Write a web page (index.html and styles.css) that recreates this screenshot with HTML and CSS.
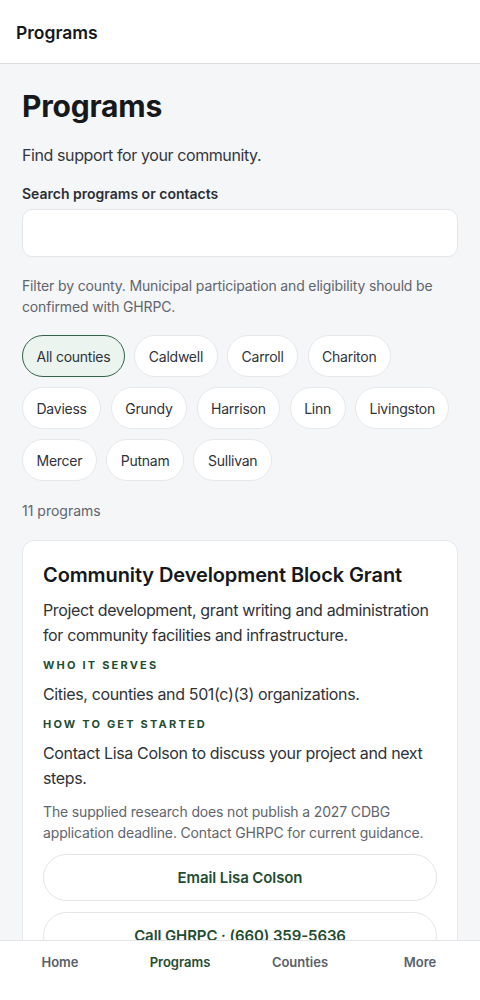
FILE: index.html
```html
<!DOCTYPE html>
<html lang="en">
<head>
<meta charset="utf-8">
<meta name="viewport" content="width=device-width, initial-scale=1">
<title>Programs</title>
<link rel="stylesheet" href="styles.css">
</head>
<body>
<header class="topbar">
  <span class="topbar-title">Programs</span>
</header>

<main class="page">
  <h1 class="page-title">Programs</h1>
  <p class="lede">Find support for your community.</p>

  <div class="search">
    <label class="search-label" for="q">Search programs or contacts</label>
    <input class="search-input" id="q" type="search">
  </div>

  <p class="hint">Filter by county. Municipal participation and eligibility should be confirmed with GHRPC.</p>

  <div class="chips">
    <button class="chip is-active">All counties</button>
    <button class="chip">Caldwell</button>
    <button class="chip">Carroll</button>
    <button class="chip">Chariton</button>
    <button class="chip">Daviess</button>
    <button class="chip">Grundy</button>
    <button class="chip">Harrison</button>
    <button class="chip">Linn</button>
    <button class="chip">Livingston</button>
    <button class="chip">Mercer</button>
    <button class="chip">Putnam</button>
    <button class="chip">Sullivan</button>
  </div>

  <p class="count">11 programs</p>

  <article class="card">
    <h2 class="card-title">Community Development Block Grant</h2>
    <p class="card-text">Project development, grant writing and administration for community facilities and infrastructure.</p>
    <h3 class="card-label">Who it serves</h3>
    <p class="card-text">Cities, counties and 501(c)(3) organizations.</p>
    <h3 class="card-label">How to get started</h3>
    <p class="card-text">Contact Lisa Colson to discuss your project and next steps.</p>
    <p class="card-note">The supplied research does not publish a 2027 CDBG application deadline. Contact GHRPC for current guidance.</p>
    <a class="card-btn" href="#">Email Lisa Colson</a>
    <a class="card-btn" href="#">Call GHRPC · (660) 359-5636</a>
  </article>
</main>

<nav class="tabbar">
  <a class="tab" href="#">Home</a>
  <a class="tab is-current" href="#">Programs</a>
  <a class="tab" href="#">Counties</a>
  <a class="tab" href="#">More</a>
</nav>
</body>
</html>
```

FILE: styles.css
```css
* {
  box-sizing: border-box;
}

html, body {
  margin: 0;
  padding: 0;
}

body {
  font-family: Inter, "Noto Sans", "Liberation Sans", sans-serif;
  background: #f5f6f8;
  color: #16181c;
  overflow: hidden;
  height: 1000px;
}

/* top app bar */
.topbar {
  height: 64px;
  background: #ffffff;
  border-bottom: 1px solid #d9dcdf;
  display: flex;
  align-items: center;
  padding: 0 16px;
}

.topbar-title {
  font-size: 17.5px;
  font-weight: 600;
  margin-top: 2px;
}

/* page body */
.page {
  padding: 24px 22px 0 22px;
  display: flex;
  flex-direction: column;
}

.page-title {
  margin: 0;
  font-size: 30px;
  line-height: 36px;
  font-weight: 700;
  letter-spacing: -0.2px;
}

.lede {
  margin: 19px 0 0;
  font-size: 16px;
  line-height: 24px;
  letter-spacing: -0.4px;
  color: #33373d;
}

.search {
  margin-top: 17px;
  display: flex;
  flex-direction: column;
  gap: 5px;
}

.search-label {
  font-size: 14px;
  line-height: 20px;
  font-weight: 600;
  color: #2b2f35;
}

.search-input {
  height: 48px;
  border: 1px solid #e3e5e8;
  border-radius: 10px;
  background: #ffffff;
  font: inherit;
}

.hint {
  margin: 18px 0 0;
  font-size: 14px;
  line-height: 21px;
  letter-spacing: -0.15px;
  color: #5f656d;
}

.chips {
  margin: 18px 0 0;
  display: flex;
  flex-wrap: wrap;
  gap: 10px 9.5px;
}

.chip {
  height: 42px;
  padding: 0 13.5px;
  border: 1px solid #e6e8eb;
  border-radius: 21px;
  background: #ffffff;
  font-family: inherit;
  font-size: 14px;
  letter-spacing: -0.25px;
  color: #2f3339;
}

.chip.is-active {
  background: #ebf4ee;
  border-color: #34634a;
}

.count {
  margin: 20px 0 0;
  font-size: 14px;
  line-height: 20px;
  color: #5f656d;
}

/* program card */
.card {
  margin: 19px 0 0;
  background: #ffffff;
  border: 1px solid #e6e8eb;
  border-radius: 12px;
  padding: 20px 20px 0 20px;
  display: flex;
  flex-direction: column;
  gap: 9px;
}

.card-title {
  margin: 0;
  font-size: 20px;
  line-height: 28px;
  font-weight: 600;
  letter-spacing: -0.1px;
}

.card-text {
  margin: 0;
  font-size: 16px;
  line-height: 25px;
  letter-spacing: -0.36px;
  color: #2f3339;
}

.card-label {
  margin: 0;
  font-size: 11px;
  line-height: 16px;
  font-weight: 700;
  letter-spacing: 2.2px;
  text-transform: uppercase;
  color: #1f4d31;
}

.card-note {
  margin: 1px 0 0;
  font-size: 14px;
  line-height: 21px;
  letter-spacing: -0.15px;
  color: #5f656d;
}

.card-btn {
  margin-top: 2px;
  height: 47px;
  border: 1px solid #e3e5e8;
  border-radius: 24px;
  display: flex;
  align-items: center;
  justify-content: center;
  font-size: 15px;
  font-weight: 600;
  letter-spacing: -0.1px;
  color: #1f4d31;
  text-decoration: none;
}

/* bottom tab bar */
.tabbar {
  position: fixed;
  left: 0;
  right: 0;
  bottom: 0;
  height: 60px;
  background: #ffffff;
  border-top: 1px solid #e3e5e8;
  display: grid;
  grid-template-columns: repeat(4, 1fr);
  padding-top: 11px;
}

.tab {
  text-align: center;
  font-size: 13px;
  line-height: 20px;
  font-weight: 600;
  color: #5a6068;
  text-decoration: none;
}

.tab.is-current {
  color: #1f4d31;
}
```
